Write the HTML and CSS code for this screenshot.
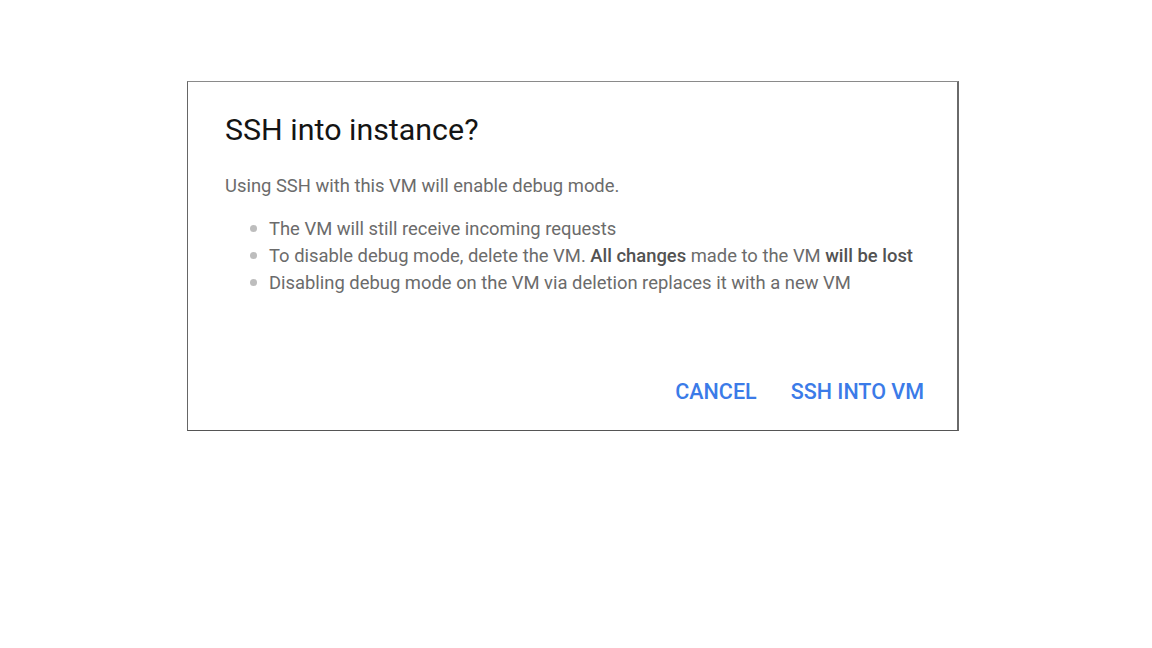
FILE: index.html
```html
<!DOCTYPE html>
<html>
<head>
<meta charset="utf-8">
<link rel="stylesheet" href="styles.css">
</head>
<body>
<div class="page">
  <div class="dialog">
    <h1 class="title">SSH into instance?</h1>
    <p class="intro">Using SSH with this VM will enable debug mode.</p>
    <ul class="list">
      <li><span>The VM will still receive incoming requests</span></li>
      <li><span>To disable debug mode, delete the VM. <b>All changes</b> made to the VM <b>will be lost</b></span></li>
      <li><span>Disabling debug mode on the VM via deletion replaces it with a new VM</span></li>
    </ul>
    <div class="actions">
      <button class="btn">CANCEL</button>
      <button class="btn">SSH INTO VM</button>
    </div>
  </div>
</div>
</body>
</html>
```
FILE: styles.css
```css
html, body { margin: 0; padding: 0; background: #fff; }
body { font-family: Roboto, "Noto Sans", sans-serif; }
.page { padding: 81px 0 0 187px; }
.dialog {
  width: 769px;
  height: 348px;
  box-sizing: content-box;
  border: 1px solid #8a8a8a;
  border-right: 2px solid #6a6a6a;
  border-bottom-color: #555;
  border-left-color: #666;
  padding: 0;
  display: flex;
  flex-direction: column;
}
.title {
  margin: 30px 0 0 37px;
  font-size: 30.4px;
  font-weight: 400;
  color: #141414;
  line-height: 36px;
}
.intro {
  margin: 26px 0 0 37px;
  font-size: 18.4px;
  color: #6b6b6b;
  line-height: 24px;
}
.list {
  margin: 17px 0 0 37px;
  padding: 0;
  list-style: none;
  color: #6b6b6b;
  font-size: 18.4px;
  line-height: 27px;
}
.list li {
  display: flex;
  align-items: center;
  gap: 12px;
  padding-left: 25px;
}
.list li::before {
  content: "";
  width: 7px;
  height: 7px;
  border-radius: 50%;
  background: #bdbdbd;
  flex: none;
}
.list b { font-weight: 500; color: #525252; }
.actions {
  margin-top: auto;
  margin-bottom: 20px;
  display: flex;
  justify-content: flex-end;
  gap: 10px;
  padding-right: 21px;
}
.btn {
  background: none;
  border: 0;
  font-family: Roboto, sans-serif;
  font-weight: 500;
  font-size: 21.5px;
  color: #3b7be8;
  padding: 4px 12px;
  letter-spacing: 0;
  line-height: 28px;
}
```
